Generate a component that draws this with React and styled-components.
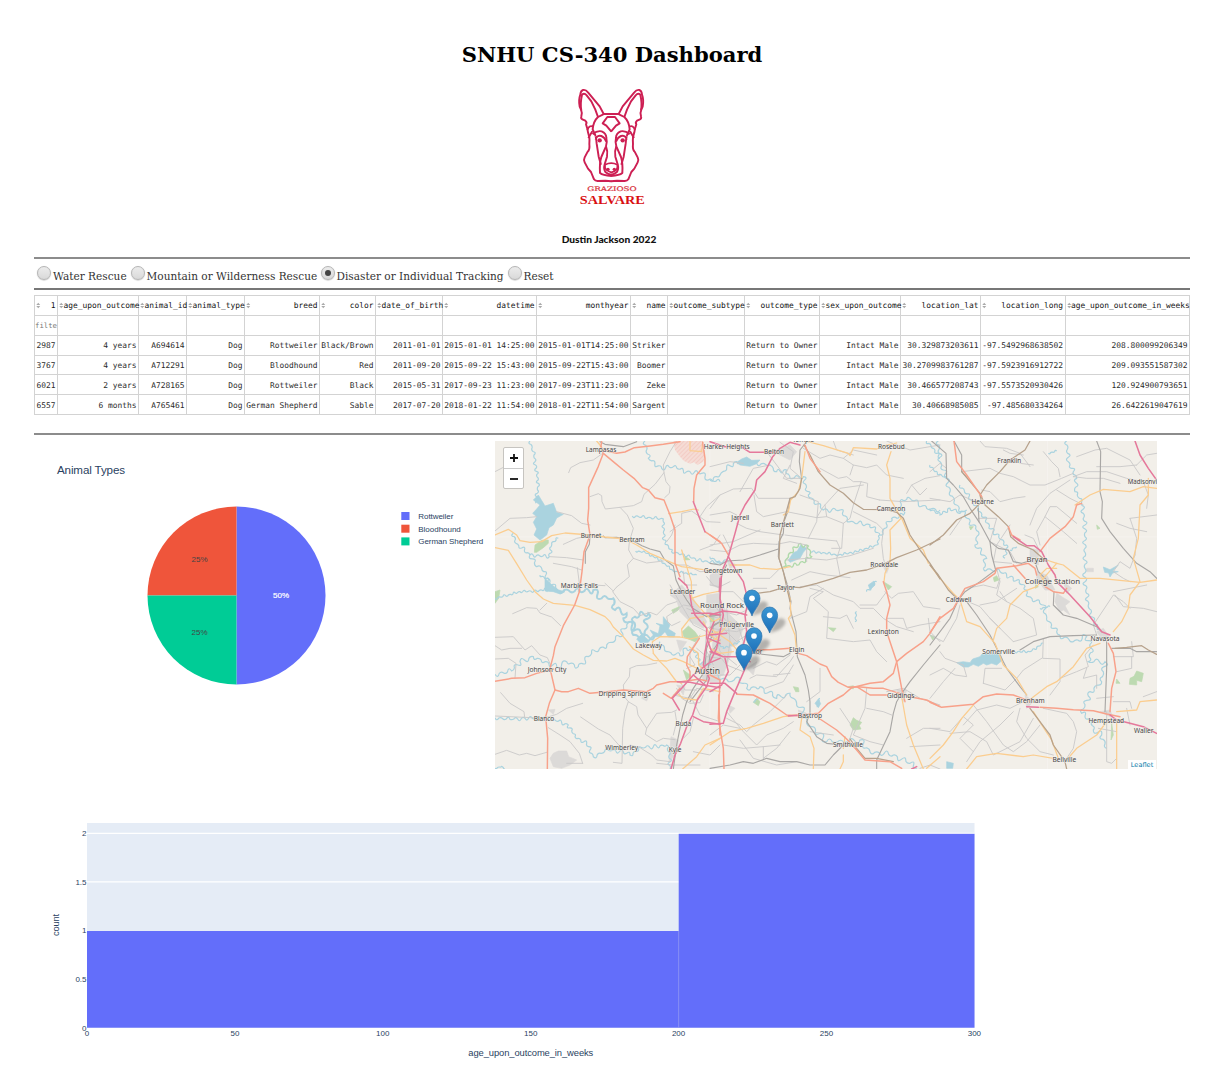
import React from "react";
import styled, { createGlobalStyle } from "styled-components";

const GlobalStyle = createGlobalStyle`
  body {
    margin: 0;
    background: #fff;
    color: #000;
    font-family: "DejaVu Serif", serif;
  }
  * { box-sizing: border-box; }
`;

const Page = styled.main`
  width: 1216px;
  height: 1077px;
  padding: 40px 26px 0 34px;
  overflow: hidden;
`;

const Header = styled.header`
  display: flex;
  flex-direction: column;
  align-items: center;
  height: 217px;
`;

const Title = styled.h1`
  margin: 0;
  height: 30px;
  line-height: 30px;
  font-size: 21.1px;
  font-weight: 700;
  white-space: nowrap;
`;

const Logo = styled.svg`
  display: block;
  width: 84px;
  height: 130px;
  margin-top: 10px;
`;

const Author = styled.h5`
  margin: 22px 6px 0 0;
  font: 900 10.2px/15px Lato, sans-serif;
  color: #111;
`;

const Rule = styled.hr`
  margin: 0;
  border: 0;
  height: 2px;
  background: ${(p) => p.$tone || "#8c8c8c"};
`;

const Options = styled.div`
  display: flex;
  height: 29px;
  padding: 6px 0 0 3px;
`;

const Option = styled.label`
  display: flex;
  align-items: flex-start;
  width: ${(p) => p.$width}px;
  font-size: 10.55px;
  line-height: 22px;
  color: #333;
  white-space: nowrap;
`;

const Radio = styled.span`
  flex: none;
  display: grid;
  place-items: center;
  width: 14px;
  height: 14px;
  margin: 1px 2px 0 0;
  border: 1px solid #b5b5b5;
  border-radius: 50%;
  background: linear-gradient(#ececec, #d9d9d9);
  box-shadow: 0 0.5px 1px #bbb;
  &::after {
    content: "";
    width: 6px;
    height: 6px;
    border-radius: 50%;
    background: ${(p) => (p.$on ? "#444" : "transparent")};
  }
`;

const Table = styled.table`
  width: 1156px;
  margin-top: 5px;
  table-layout: fixed;
  border-collapse: collapse;
  font: 7.9px/17px "DejaVu Sans Mono", monospace;
  color: #2b2b2b;
`;

const Cell = styled.td`
  height: ${(p) => p.$h || 20}px;
  padding: ${(p) => p.$drop || 0}px 1.5px 0 0;
  border: 1px solid #d3d3d3;
  text-align: right;
  white-space: nowrap;
`;

const HeadInner = styled.div`
  display: flex;
  align-items: center;
  justify-content: space-between;
  padding-left: 1px;
  line-height: 18px;
  color: #111;
`;

const SortIcon = styled.svg`
  flex: none;
  width: 4.5px;
  height: 7px;
`;

const FilterText = styled.div`
  text-align: left;
  font-size: 7.3px;
  color: #777;
`;

const Charts = styled.section`
  display: flex;
  height: 334px;
  padding-top: 6px;
`;

const PieChart = styled.svg`
  display: block;
  flex: none;
  width: 461px;
  height: 328px;
`;

const MapBox = styled.div`
  position: relative;
  flex: none;
  width: 662px;
  height: 328px;
  overflow: hidden;
  background: #f2efe9;
`;

const MapDrawing = styled.svg`
  display: block;
  width: 662px;
  height: 328px;
`;

const ZoomControl = styled.div`
  position: absolute;
  left: 8px;
  top: 6px;
  width: 21px;
  border: 1px solid #c6c4c0;
  border-radius: 2px;
  background: #fff;
`;

const ZoomButton = styled.div`
  display: grid;
  place-items: center;
  height: 20px;
  & + & { border-top: 1px solid #ccc; }
`;

const Attribution = styled.div`
  position: absolute;
  right: 1px;
  bottom: -1px;
  width: 28px;
  height: 10px;
  background: #fffffff0;
  color: #0078a8;
  text-align: center;
  font: 6.6px/10px "DejaVu Sans", sans-serif;
`;

const Histogram = styled.svg`
  display: block;
  width: 1000px;
  height: 290px;
  margin-top: 11px;
`;

const columns = [
  ["1", 23], ["age_upon_outcome", 81], ["animal_id", 48], ["animal_type", 58], ["breed", 75],
  ["color", 56], ["date_of_birth", 67], ["datetime", 94], ["monthyear", 94], ["name", 37],
  ["outcome_subtype", 77], ["outcome_type", 75], ["sex_upon_outcome", 81], ["location_lat", 80],
  ["location_long", 84.5], ["age_upon_outcome_in_weeks", 124.5],
];

const rows = [
  ["2987", "4 years", "A694614", "Dog", "Rottweiler", "Black/Brown", "2011-01-01", "2015-01-01 14:25:00", "2015-01-01T14:25:00", "Striker", "", "Return to Owner", "Intact Male", "30.329873203611", "-97.5492968638502", "208.800099206349"],
  ["3767", "4 years", "A712291", "Dog", "Bloodhound", "Red", "2011-09-20", "2015-09-22 15:43:00", "2015-09-22T15:43:00", "Boomer", "", "Return to Owner", "Intact Male", "30.2709983761287", "-97.5923916912722", "209.093551587302"],
  ["6021", "2 years", "A728165", "Dog", "Rottweiler", "Black", "2015-05-31", "2017-09-23 11:23:00", "2017-09-23T11:23:00", "Zeke", "", "Return to Owner", "Intact Male", "30.466577208743", "-97.5573520930426", "120.924900793651"],
  ["6557", "6 months", "A765461", "Dog", "German Shepherd", "Sable", "2017-07-20", "2018-01-22 11:54:00", "2018-01-22T11:54:00", "Sargent", "", "Return to Owner", "Intact Male", "30.40668985085", "-97.485680334264", "26.6422619047619"],
];

const options = [["Water Rescue", 93.5], ["Mountain or Wilderness Rescue", 190], ["Disaster or Individual Tracking", 187], ["Reset", 60]];

/* Each map tile is traced on its own grid; the tiles sit side by side, 660 units apart. */
const tiles = [
  {
    minor: [
      "15,110 40,97", "236,113 242,98 270,83 310,75 338,55", "390,217 430,212 455,200 462,178 495,148 522,113 520,90 540,50 560,18", "522,113 528,140 540,155 538,175 524,188",
      "300,185 325,176 335,182 336,200 346,222 390,217 412,240 430,280 418,320 416,345 430,370 412,390 418,425 400,440 380,456",
      "15,288 60,250 110,248 140,245", "200,230 245,242 275,265 300,270", "220,328 260,310 300,302", "180,365 230,368 280,375", "190,385 245,395 275,405", "262,398 268,445 265,470",
      "430,370 470,384 520,378", "380,456 368,470 390,500 430,520 450,542 480,532 500,540 530,510 560,500", "345,445 370,468", "275,448 345,452",
      "68,536 110,518 140,520 150,534 185,546 212,572", "170,505 150,525", "15,607 70,605 90,628 105,645 125,632 150,660 172,668 182,690",
      "15,672 55,670 78,685 75,730", "15,632 35,645 60,640 95,640", "420,700 440,692 470,690 500,684", "420,700 418,725 400,750 403,785 415,800 405,830 398,880 396,985 370,982",
      "32,773 60,805 102,830 104,847 15,843", "104,847 160,850 200,838 230,820 278,805", "272,846 325,882 360,900 395,940", "415,800 440,815 444,840 470,880 466,898 500,920 520,910 555,914",
      "470,880 500,835 545,832 560,825", "175,878 210,900 240,920 268,955 278,985", "278,985 230,985", "15,958 50,946 88,960 110,955 135,962 170,952", "398,945 420,930 450,938 485,960 500,975 540,980",
      "500,985 550,990 630,990", "540,290 560,275 575,265 575,235 605,228 650,260 690,262", "530,320 545,300 555,270", "690,180 650,215 628,248", "690,300 670,330 630,345",
      "555,390 590,390 630,410 690,408", "580,410 584,450 620,450", "533,560 530,545 560,525 580,510 610,515", "533,560 545,572 570,560", "540,450 554,475 580,520 610,570 650,590",
      "650,425 670,450 690,460", "590,520 640,540 690,550", "600,665 615,690 590,700", "560,760 575,790 600,805 630,803 640,780", "570,740 585,765 620,765", "600,780 630,840 690,860",
      "555,830 560,860 550,900", "610,850 600,890 580,910", "690,560 650,580 646,640 670,690", "620,640 650,665 690,670", "630,600 600,650 600,690", "550,780 600,790 620,760 670,770", "610,950 660,960 690,930",
    ],
    rail: ["340,303 345,308 380,307 430,318 456,332 480,342 510,350 523,373 550,393 558,435 575,470 590,495 608,520 650,545 690,540", "300,302 298,328 286,350 286,385", "690,560 670,570 665,605 650,640 645,690 640,715 610,760 590,800 578,840 568,890 560,930 550,1002", "330,20 345,28 400,35 440,20", "690,615 660,660 650,735 600,800"],
    primary: [
      "15,300 55,283 80,300 90,317 120,322 155,320 185,302 225,294 300,300 345,306 405,312 440,330 480,355 545,383 575,395 640,404 690,406",
      "15,338 55,346 80,386 110,435 135,470 160,492 190,505 255,511 300,524 345,545 360,560 370,576 400,605 430,642 460,660 490,676 530,678 555,670 580,680 625,702",
      "536,236 575,230 612,222 625,225", "575,345 590,395 604,440 605,490 640,530 670,560 690,550", "605,490 640,478 690,468", "490,655 487,620 510,605 570,606 600,612 650,600 690,590",
      "577,606 575,582 600,550 640,545", "490,655 510,680 530,700 558,738 575,745", "600,18 600,47 635,50 638,22", "560,775 580,790 620,795 640,760 690,770", "320,18 330,30 336,50",
      "578,1002 620,965 645,930 690,910", "598,635 625,655 626,690 660,720", "640,560 660,600 690,620",
    ],
    trunk: [
      "335,18 333,33 340,55 325,94 296,158 296,220 293,255 300,300 282,350 276,410 268,470 254,510 220,572 195,635 190,662 180,700 195,765 178,805 167,845 173,910 172,1002",
      "340,55 376,85 400,105 432,130 458,158 475,165 495,188 522,195 540,240 555,285 555,385 570,425", "338,46 380,55 405,51 433,38 480,33 520,28 570,20",
      "638,22 645,70 645,90 620,120 612,160 611,200", "645,290 690,320", "15,739 65,730 105,728 140,715 168,708 190,702",
      "195,765 215,770 235,770 265,760 300,775 350,770 400,765 470,770 490,760 500,750 540,740 573,740 625,733 650,737", "628,610 612,635 592,665 590,690 600,710 600,732", "520,775 544,790 570,760", "686,780 690,900",
    ],
    motorway: [
      "610,200 625,240 645,290", "566,430 590,452 600,480 605,512 615,540 632,560 650,580 650,608 665,650 690,660", "605,535 660,535 690,540", "690,430 688,470",
      "672,560 655,605 645,650 640,690 658,730 650,755 622,795 608,840 590,875 572,925 555,960 543,1002", "562,740 600,742 640,750 690,758", "547,790 575,760 610,720 655,685 690,670", "547,790 568,825", "610,845 640,860 690,868", "610,720 650,755", "655,610 690,625",
    ],
    river: [
      ["120,18 132,60 138,100 145,145 138,205", 7], ["70,295 78,325 120,360 140,395 155,400 180,440 205,465", 9], ["205,310 185,325 178,365 120,360", 7],
      ["15,490 55,480 90,470 140,468 170,462", 5], ["205,465 270,470 310,465 335,490 370,490 375,525 410,535 400,550 425,575 465,600 475,535 435,545 430,600 460,610 510,600", 13, 6],
      ["15,718 65,708 90,680 130,665 165,680 200,695 230,680 265,695 305,655 350,630 390,605 410,570 430,565", 11], ["15,848 60,853 105,850 170,850 195,855 235,870 255,905 290,925 310,965 355,945 400,950 420,960 455,938 490,935 530,930 538,960 540,1002", 8],
      ["465,18 475,70 515,100 550,95 590,110 635,115 655,135 690,140", 9], ["427,243 520,252 522,315 545,350 575,357 625,375 690,385", 6], ["437,348 465,352 510,375 550,408 620,420", 4], ["510,620 530,650 570,662 590,640 620,650 625,680 690,700", 9], ["15,1000 35,994 45,1002", 3], ["150,420 175,435 170,470", 5],
    ],
    water: ["130,195 145,180 165,213 190,205 200,232 220,238 200,249 190,270 177,278 170,300 150,315 132,300 140,282 130,262 140,245 128,235 140,222 150,210", "165,430 180,445 205,465 225,470 210,477 190,470 165,468", "440,612 455,598 475,615 490,600 480,585 505,596 510,572 498,565 520,570 520,545 540,570 535,582 556,595 553,606 535,606 525,590 510,605 490,605 475,622 450,623"],
    green: ["135,330 155,316 175,315 175,325 160,338 140,352 133,352", "577,590 595,573 615,590 628,610 615,620 582,607", "15,470 30,465 26,490 15,505", "580,705 603,722 590,735", "585,364 600,374 582,375", "545,525 568,515 565,525 550,535"],
    urban: ["190,955 205,948 230,948 236,965 260,975 240,990 215,1000 190,995 180,970", "540,480 575,450 610,490 650,560 640,580 600,560 570,530 560,495", "560,615 590,620 570,650", "630,690 670,640 690,640 690,740 640,740", "460,780 475,785 470,798 455,790", "543,905 565,915 560,955 537,980", "175,825 195,823 190,838", "650,480 690,475 690,570 650,540", "560,750 585,755 580,780"],
    labels: [["Lampasas", 333, 51, 92], ["Harker Heights", 710, 42, 138], ["Burnet", 303, 308, 62], ["Bertram", 426, 320, 76], ["Marble Falls", 268, 459, 111], ["Leander", 578, 476, 76], ["Lakeway", 476, 639, 80], ["Johnson City", 171, 712, 116], ["Dripping Springs", 404, 784, 157], ["Blanco", 162, 857, 62], ["Wimberley", 395, 944, 98], ["Buda", 580, 873, 47], ["Kyle", 555, 950, 38], ["Georgetown", 699, 413, 116]],
  },
  {
    minor: [
      "0,95 60,80 100,85", "0,220 30,180 70,162 125,160 145,190 240,190", "0,240 60,230 80,240", "132,180 140,230 160,245 230,230 320,248", "80,265 110,280 150,290 220,300", "0,330 70,320 150,285", "0,345 50,350 90,330 130,325 200,328",
      "90,170 130,100 180,90", "170,50 200,90 230,130 275,130", "240,90 220,130 260,145", "225,300 300,310 380,318", "320,248 350,245 400,265 420,250 430,210 453,140 473,145 470,185 508,195", "320,248 340,215 390,160 460,150",
      "275,130 240,100 250,50 210,22", "330,100 385,130 410,125 430,140 453,140", "280,40 330,70 360,60 400,70 430,90 420,120", "430,90 470,98 500,90 530,120 580,130", "400,70 430,45 500,60", "370,18 380,45 430,60", "530,18 600,45 690,30", "590,175 605,150 645,130 690,122", "605,150 630,180 650,160", "508,195 580,200 690,195", "400,265 395,340 365,340", "430,230 500,265 520,285", "520,285 515,325 520,370 530,405", "380,318 390,340 380,370 390,420", "295,310 320,260 325,200 270,180", "350,245 345,210", "230,375 290,370 350,375 420,362 490,340", "200,328 240,320 290,330 290,380", "210,400 180,430 130,430", "245,435 300,410 350,420 420,428", "300,460 340,470 310,490 355,530 350,610 430,620 480,615 500,650 530,680", "270,455 320,450 370,480 430,500 450,520 490,520 520,550 560,575 610,590", "240,550 290,530 300,485 340,460", "340,545 390,550 410,540 430,580", "525,470 545,490 565,475 610,470 640,515 690,522", "530,470 500,510 450,510", "530,550 580,550 590,580 630,570 690,560", "655,550 660,590 690,620",
      "120,730 140,720 200,725 240,680 250,665", "165,760 220,740 250,690", "190,720 240,715", "330,700 330,770 290,800", "390,820 430,880 420,910", "470,760 465,820 430,900 480,920 520,930", "470,820 520,830 545,840", "530,770 580,760 630,790 690,810",
      "50,850 90,870 110,890 130,870 180,830 230,780", "50,830 100,890 140,930 170,900 220,880 250,860", "40,930 100,940 160,935 210,930", "0,900 40,870 90,880", "90,915 130,970 200,990 260,980", "160,935 160,970", "240,890 200,940 160,970", "300,890 370,900", "590,910 640,880 690,880", "600,935 690,930", "690,1002 660,990 630,1000", "0,550 40,530 80,540 120,520", "0,600 40,580 80,620 110,600", "0,450 30,455 60,440", "20,470 70,470 100,500", "50,520 60,620 50,690", "80,560 100,620 90,650", "10,640 50,690 100,710", "0,720 60,720 90,690", "130,700 170,680 200,690 240,660", "100,490 130,460 170,460", "40,300 60,340 50,380", "20,520 50,560 110,570", "0,580 80,590 130,570", "15,590 30,650 80,690",
    ],
    rail: ["240,190 235,225 222,260 220,295 207,320 205,365 220,410 232,450 243,500 240,520 258,590 262,665 285,720 295,765 300,800 300,835 290,860 320,905 350,925 395,930 435,932", "0,385 30,390 50,378 100,375 150,360 205,342", "130,655 220,665 240,655 240,640", "0,580 30,560 30,480 35,420 50,390", "0,1000 60,990 100,980 130,985 170,970 210,980 260,980 300,990 345,990 370,960 400,930", "500,1002 500,975 540,890 550,835 560,800 575,775 600,740 640,690 690,630", "275,130 268,80 270,45 290,20"],
    brown: ["282,30 300,60 325,110 360,150 400,175 430,203 460,223 530,224 560,232 580,250 600,300 630,345 660,385 690,432", "690,312 620,345 560,368 520,388 470,405 420,412 370,430 320,445 270,458 230,455 180,470 120,478", "275,130 270,160 255,185 240,190 210,300 207,370 220,410 240,500", "420,912 440,940 465,970 500,970 550,980"],
    primary: ["285,50 275,130 265,170 242,195 235,230 220,240", "285,18 340,32 415,55 420,62 430,38 500,42 530,30 560,24", "543,50 530,90 540,130 540,190 573,250 540,285 542,340 540,380 525,415 522,440", "575,250 600,310 640,345 655,385", "60,390 120,390 150,400 200,403 240,395", "230,460 240,490 243,540 235,550 255,600 260,650", "60,560 20,610 0,620", "0,930 60,890 110,880 160,865 220,845 262,840", "275,850 270,885 300,905 312,940 310,1002", "400,960 400,980 390,1002", "560,775 575,785 590,870 610,930 640,1002", "690,965 650,1000", "0,580 60,620 110,680", "0,640 30,655 70,650", "405,905 400,940"],
    trunk: ["285,30 300,70 330,110", "0,300 35,325 55,360", "110,644 180,644 240,640", "265,655 290,662 330,687 350,695 365,725 385,742 415,757 445,755 490,760 520,760 600,785 650,795 690,815", "425,758 400,780 355,805 325,835 275,840", "425,758 480,745 520,740 550,715 560,680 590,655 640,620 660,595 690,545", "520,440 530,470 540,510 530,550 530,590 560,680 575,760 585,800", "80,778 130,780 180,805 230,840 280,843", "330,852 380,885 410,912 440,945 465,975 540,980 575,1000", "0,720 30,735 25,850 40,940 42,1002", "440,755 480,780 530,780"],
    motorway: ["270,30 240,22 210,40 188,65 165,110 140,135 135,165 105,210 90,240 75,295 55,365 35,410 30,490 40,540 30,590 20,640 0,680", "55,365 80,410 100,440 115,500 105,540 110,590 100,630 110,690 75,770 50,830 40,865 0,868", "0,20 45,35 90,33 120,52 195,52", "0,540 40,528 80,532 110,540", "0,650 40,665 100,665 120,680", "0,745 45,745 80,775", "45,670 55,710 35,750 0,770", "235,843 275,840", "0,600 50,595", "605,1002 620,995"],
    river: [["0,135 30,120 50,98 80,80 100,85", 9], ["140,85 180,90 200,110 230,105 240,130 280,125 295,180 340,225 390,225 420,260 480,270 510,300 545,250 580,240 570,200 600,190 625,205 650,220 690,225", 9], ["510,300 500,330 440,350 385,360 330,352 300,350", 5], ["0,365 30,385 50,375", 6], ["25,720 55,740 90,730 110,760 150,755 200,790 240,775 260,805 280,830 290,865 330,895 350,920 400,920 450,915 480,950 550,960 600,985 620,1000", 12], ["0,600 40,640 90,620", 4], ["500,440 470,470", 6], ["650,18 670,40 690,70", 7], ["440,530 435,560", 5], ["130,800 145,790", 4], ["330,790 320,815", 4]],
    water: ["80,82 95,72 110,66 125,76 150,75 140,86 120,94 90,90", "235,376 250,353 262,348 272,330 290,340 280,352 270,370 240,382", "475,450 492,438 495,450 480,465", "315,805 325,792 332,806 325,818"],
    green: ["250,755 265,758 267,770 257,770", "420,870 430,848 440,856 455,862 448,872 453,882 430,885", "130,802 140,790 150,800 145,812", "355,578 378,580 370,590", "520,440 545,455 535,465", "415,755 430,752 430,762", "0,540 12,538 12,560 0,560"],
    urban: ["0,505 25,490 50,530 100,580 80,630 50,640 0,600", "10,600 50,590 65,650 40,720 0,735", "190,50 240,30 260,50 240,75", "265,825 290,835 290,850 270,850", "0,420 30,405 30,460 0,450", "50,375 80,390 60,400", "560,765 590,765 580,800", "515,385 540,390 530,415", "110,700 140,680 130,720", "55,810 75,820 60,835"],
    labels: [["Belton", 192, 57, 60], ["Temple", 280, 22, 65], ["Rosebud", 544, 42, 80], ["Jarrell", 91, 254, 54], ["Bartlett", 217, 276, 69], ["Cameron", 543, 229, 86], ["Rockdale", 523, 396, 84], ["Taylor", 228, 464, 54], ["Round Rock", 36, 519, 132, 22], ["Pflugerville", 80, 575, 104], ["Manor", 127, 656, 60], ["Elgin", 260, 651, 46], ["Austin", -8, 718, 76, 25], ["Lexington", 520, 596, 93], ["Giddings", 572, 790, 82], ["Bastrop", 300, 850, 73], ["Smithville", 414, 937, 90]],
  },
  {
    minor: [
      "95,110 180,100 210,115 250,125 300,150 345,150 395,130 430,115", "150,18 165,35 230,40 270,55 300,95", "220,45 240,55 280,60", "340,50 365,80 385,100 390,125", "270,85 310,90", "0,110 30,85 50,100", "0,190 60,200 90,180 150,205", "155,165 180,170 210,200 250,190 285,185",
      "430,125 470,110 530,110 590,130 640,140", "430,125 470,130 520,130 570,145", "500,95 570,95 620,90", "440,65 495,45 530,40 600,75 630,120", "300,270 320,220 360,175 420,135", "330,330 320,290 345,245 360,215 380,215 440,265", "345,245 400,290 440,325", "380,165 420,190 460,210", "285,300 310,310 325,340", "240,270 200,330 190,380 245,385", "145,250 200,250 180,320 240,350 260,385", "95,250 60,300", "200,400 210,440 200,480 230,500", "110,460 160,450 200,460 210,430", "90,490 150,515 180,550 210,580", "150,510 200,500 260,460", "210,470 230,500 270,520 310,550 320,600 250,620", "180,550 250,620", "0,600 40,620 80,550 90,510", "30,650 45,670 100,690 110,725 75,720 40,700 0,720", "0,790 40,740 75,700", "100,870 140,825 200,810 240,820 280,800", "160,745 165,700 215,700", "160,745 225,765 260,730 280,705 335,670", "340,610 338,670 390,672 390,740 360,780", "390,730 440,710 475,695 465,660 490,630", "130,810 170,860 220,930 250,950 290,920 330,870", "60,895 120,890 170,920 190,960 270,920 310,850", "0,880 60,890 100,845 130,870 90,910 130,950", "110,980 150,920 210,870 250,830", "270,820 260,860 290,910 330,950 370,960", "340,820 410,835 430,860 440,890 430,940 410,970", "500,600 490,570 510,540 550,480 580,500 600,520", "560,265 600,280 650,290", "640,140 655,180 650,220", "600,250 680,240", "615,360 620,310 600,250", "615,360 600,400 570,380 550,410 580,430 600,440", "550,470 600,460 650,450", "555,480 580,515 640,520 680,530", "620,90 650,60 680,55", "550,665 610,665 605,620", "560,710 605,700 605,665", "550,800 600,800 605,820", "500,790 550,785", "500,860 560,860", "530,830 530,980 545,985 560,970", "505,880 560,890", "590,820 600,870", "680,770 640,785", "500,760 500,720 460,730 470,700",
    ],
    rail: ["5,18 48,55 50,130 70,150 100,185 120,220 150,265 180,320 185,360 197,405 150,440 105,470 85,495 60,550 0,630", "72,18 95,60 95,110 130,150", "180,320 205,340 235,345 250,380 275,385 290,380", "145,220 147,260", "500,18 512,50 510,170 517,200 515,250 540,290 580,340 620,385 660,410 680,430", "372,470 370,510 400,540 440,550 500,575 515,590", "270,645 310,620 360,605 430,602 500,600", "318,390 325,410 355,440", "530,620 530,700 525,830", "545,640 600,640 620,650 680,650", "110,500 140,540 180,600 220,680 230,700 270,755 290,780"],
    brown: ["300,18 285,45 240,75 210,110 170,150 150,180 155,200 120,235 80,255 40,300 0,330", "95,110 150,175 165,210 205,245 235,275 242,305 265,325 310,345 350,380", "0,390 25,420 55,465 90,500", "300,820 345,880 360,900 370,930 405,980 410,1002", "555,640 590,637 635,632 655,645 680,658"],
    primary: ["0,390 30,430 70,475 90,495 110,560 150,575 195,625 220,690 260,730 290,780", "190,615 200,580 230,550 240,510 280,470 320,455 340,430 380,385", "435,210 480,180 520,163 600,170 640,155 680,160", "655,130 655,180 630,210 625,310 615,350 610,370 630,440 600,480 595,520 575,560 550,590", "380,385 400,390 450,430 510,430 630,442 680,435", "350,450 330,420 350,400 380,400", "315,370 350,375 380,385", "285,805 350,755 380,740 430,695 470,640 510,625", "0,970 40,930 70,890 95,850 130,810", "110,1002 140,965 200,955 280,965 310,960 370,970", "310,830 345,885 365,915 385,970", "410,975 440,940 500,900 530,860", "560,860 560,1002", "560,830 620,825 630,800 680,795"],
    trunk: ["72,18 80,80 110,120 155,185", "330,350 360,310 405,275 430,245 440,210 455,205", "0,593 30,550 70,520 85,495 105,460 160,440 195,415 200,400 260,392 295,385 315,400 320,420", "250,390 285,430", "235,275 245,300 270,315", "345,455 370,470 400,475 410,460", "0,802 35,817 130,808 160,785 200,777 250,780 290,795", "330,817 380,820 430,824 490,827 530,837 570,845", "535,625 550,655 558,710 545,760 540,830", "80,490 90,490"],
    motorway: ["250,305 290,332 312,332 335,350 355,390 375,420 380,440 420,480 480,545 515,590 540,600", "615,18 630,60 655,100 680,135", "290,815 325,817", "540,840 560,855 600,865 640,875 680,895"],
    river: [["25,18 30,80 50,130 60,170 80,210 120,260 145,290 135,330 170,370 160,400", 10], ["160,400 210,410 250,430 285,455 295,485 340,510 350,550 380,590 390,600", 9], ["390,600 430,620 470,605 485,640 475,680 525,680 515,740 480,770 455,835 485,860 490,885 515,900 530,940", 12], ["0,220 30,240 60,220 90,235 110,225", 7], ["90,150 150,230 190,290 230,330 225,370", 8], ["410,18 415,80 440,130 435,170 455,200 465,270 465,340 465,400 465,440 475,510 495,570 510,580", 9], ["355,55 380,48", 4], ["255,650 300,650 340,625", 5], ["330,520 360,515", 4], ["240,345 260,335", 5], ["50,130 15,110 0,90", 5]],
    water: ["80,683 100,680 120,683 128,672 150,665 158,655 180,658 210,655 218,675 200,690 185,685 170,690 160,685 145,694 130,688 115,696 100,696", "520,396 540,404 565,390 548,408 565,410 548,414 540,426 536,414 524,412", "50,980 70,985 68,1000 50,1000"],
    green: ["600,730 612,724 620,708 640,715 635,740 620,736 620,750 598,748", "190,428 200,422 207,435 193,440", "500,270 510,280 502,283", "545,865 550,900 543,915", "560,732 570,745 558,745", "118,275 130,275 122,285", "0,600 15,605 8,615", "317,448 325,455 316,460"],
    urban: ["320,410 350,420 375,465 345,465 320,430", "380,475 400,488 420,500 405,512 420,540 400,525 390,530 375,500", "400,440 425,460 410,475", "300,340 325,345 325,390 300,380", "500,590 520,580 540,610 520,620", "470,400 490,400 490,410 470,410", "285,780 310,800 290,820", "510,830 540,825 550,850"],
    labels: [["Franklin", 238, 83, 72], ["Hearne", 158, 207, 67], ["Madisonville", 647, 148, 108], ["Bryan", 321, 380, 63, 22], ["College Station", 367, 446, 166, 22], ["Caldwell", 86, 500, 77], ["Somerville", 206, 656, 98], ["Navasota", 525, 618, 87], ["Brenham", 301, 803, 86], ["Hempstead", 529, 865, 107], ["Waller", 641, 893, 58], ["Bellville", 403, 982, 71]],
  },
];

function meander(text, amplitude) {
  const points = text.split(" ").map((p) => p.split(",").map(Number));
  let d = `M${points[0]}`;
  let side = 1;
  for (let i = 1; i < points.length; i++) {
    const [x0, y0] = points[i - 1];
    const [x1, y1] = points[i];
    const dx = x1 - x0;
    const dy = y1 - y0;
    const length = Math.hypot(dx, dy);
    const steps = Math.max(1, Math.round(length / (amplitude + 3)));
    for (let s = 0; s < steps; s++) {
      const swing = side * amplitude * (0.95 + 0.6 * Math.sin(i * 2.3 + s * 1.7));
      const mid = (s + 0.5) / steps;
      const end = (s + 1) / steps;
      d += `Q${(x0 + dx * mid - (dy / length) * swing).toFixed(1)},${(y0 + dy * mid + (dx / length) * swing).toFixed(1)} ${(x0 + dx * end).toFixed(1)},${(y0 + dy * end).toFixed(1)}`;
      side = -side;
    }
  }
  return d;
}

const Lines = ({ items = [], color, width }) => (
  <g fill="none" stroke={color} strokeWidth={width} strokeLinejoin="round" strokeLinecap="round">
    {items.map((p) => <polyline key={p} points={p} />)}
  </g>
);

const Areas = ({ items, color }) => (
  <g fill={color} stroke={color} strokeWidth="2" strokeLinejoin="round">
    {items.map((p) => <polygon key={p} points={p} />)}
  </g>
);

const pins = [[786, 543], [839, 594], [792, 656], [762, 706]];

function RegionMap() {
  const each = (draw) => tiles.map((t, i) => <g key={i} transform={`translate(${i * 660} 0)`}>{draw(t)}</g>);
  return (
    <MapBox>
      <MapDrawing viewBox="15 18 1986 984">
        <defs>
          <linearGradient id="pin" x1="0" y1="0" x2="0" y2="1">
            <stop offset="0" stopColor="#3c97d3" />
            <stop offset="1" stopColor="#1d6fb9" />
          </linearGradient>
          <filter id="soft" x="-50%" y="-50%" width="200%" height="200%"><feGaussianBlur stdDeviation="5" /></filter>
          <pattern id="range" width="9" height="9" patternUnits="userSpaceOnUse" patternTransform="rotate(45)">
            <rect width="9" height="9" fill="#f5dcd5" />
            <path d="M0 0V9" stroke="#f2c5bd" strokeWidth="4" />
          </pattern>
        </defs>
        <rect x="15" y="18" width="1986" height="984" fill="#f2efe9" />
        <path d="M660 18V1002M1672 18V1002M15 306H2001" stroke="#f7f5f1" strokeWidth="2" />
        <polygon points="550,18 555,45 570,65 582,78 600,86 612,82 622,90 640,80 645,62 638,18" fill="url(#range)" />
        {each((t) => (
          <>
            <Areas items={t.urban} color="#dcdad8" />
            <Areas items={t.green} color="#bddab1" />
            <Areas items={t.water} color="#aad3df" />
            <g fill="none" stroke="#aad3df">
              {t.river.map(([p, a, w = 3.6]) => <path key={p} d={meander(p, a)} strokeWidth={w} />)}
            </g>
          </>
        ))}
        <path d={meander("880,395 895,360 925,330 955,333 965,365 920,390 880,395", 8)} fill="none" stroke="#afd9a9" strokeWidth="4" />
        {each((t) => <Lines items={t.minor} color="#c9c8c8" width="2.7" />)}
        {each((t) => <Lines items={t.rail} color="#a9a7a5" width="3.4" />)}
        {each((t) => <Lines items={t.primary} color="#fbcd8f" width="3.8" />)}
        {each((t) => <Lines items={t.brown} color="#b7a28c" width="3.8" />)}
        {each((t) => <Lines items={t.trunk} color="#f8a18a" width="4.4" />)}
        {each((t) => <Lines items={t.motorway} color="#e5789b" width="4.6" />)}
        <g fontFamily="Noto Sans, sans-serif" textAnchor="middle" fill="#444" stroke="#f5f2ed" strokeWidth="2.5" strokeLinejoin="round" paintOrder="stroke">
          {each((t) => t.labels.map(([name, x, y, width, size = 20]) => (
            <text key={name} x={x} y={y} fontSize={size} textLength={width} lengthAdjust="spacingAndGlyphs">{name}</text>
          )))}
        </g>
        {pins.map(([x, y]) => (
          <g key={x} transform={`translate(${x} ${y})`}>
            <path d="M0 0L16 -34Q34 -52 46 -38Q52 -24 26 -8Z" fill="#444" opacity=".36" filter="url(#soft)" />
            <path d="M0 0C-5 -17 -24 -32 -24 -53A24 25 0 0 1 24 -53C24 -32 5 -17 0 0Z" fill="url(#pin)" stroke="#2d73aa" strokeWidth="2" />
            <circle cy="-53" r="8.5" fill="#fff" />
          </g>
        ))}
      </MapDrawing>
      <ZoomControl>
        {["M1 5H9M5 1V9", "M1 5H9"].map((d) => (
          <ZoomButton key={d}><svg width="10" height="10"><path d={d} stroke="#111" strokeWidth="1.8" /></svg></ZoomButton>
        ))}
      </ZoomControl>
      <Attribution>Leaflet</Attribution>
    </MapBox>
  );
}

function DogLogo() {
  const half = (
    <>
      <path d="M124 102H101L89 79L54 37Q47 28 39 30Q32 32 31 44Q25 60 29 80L33 89Q37 97 34 109Q32 116 37 118L46 122Q52 127 48 133L52 146L54 157L58 172Q59 180 58 192Q60 210 53 215L44 232Q40 240 44 247L54 266L63 276L72 298Q76 304 85 303L106 302L124 304" />
      <path d="M34 91Q30 70 36 44Q43 38 50 46L64 64L76 89L84 111L100 103" />
      <path d="M84 111Q70 124 68 148L77 168M52 150Q58 134 69 140M55 174L67 154M68 163Q81 151 95 154Q109 160 109 173Q112 186 108 199L94 231Q88 250 90 279Q98 286 124 288" />
      <path d="M77 169Q79 178 80 191L86 230L93 254M77 179Q81 164 94 168Q104 172 109 185M108 199Q114 214 111 230L104 253Q100 268 107 277Q114 283 124 284" />
      <path d="M124 111H112L98 130L109 137L124 155" />
    </>
  );
  return (
    <Logo viewBox="0 0 252 390">
      <g fill="none" stroke="#cd1f53" strokeWidth="5.8" strokeLinejoin="round">
        <g>{half}</g>
        <g transform="translate(247 0) scale(-1 1)">{half}</g>
      </g>
      <path d="M105 254Q124 245 142 254V262Q141 272 124 277Q107 272 105 262Z" fill="none" stroke="#cd1f53" strokeWidth="5" />
      <g fill="#cd1f53"><circle cx="89" cy="181" r="6.5" /><circle cx="158" cy="181" r="6.5" /><circle cx="114" cy="268" r="5" /><circle cx="133" cy="268" r="5" /></g>
      <g textAnchor="middle">
        <text x="126" y="332" fontSize="19" fontFamily="DejaVu Serif, serif" fill="#d8313b" stroke="#d8313b" strokeWidth=".6" textLength="148" lengthAdjust="spacingAndGlyphs">GRAZIOSO</text>
        <text x="127" y="371" fontSize="37" fontWeight="700" fontFamily="Liberation Serif, serif" fill="#d90f12" textLength="195" lengthAdjust="spacingAndGlyphs">SALVARE</text>
      </g>
    </Logo>
  );
}

const breeds = [["Rottweiler", "#636efa", 35], ["Bloodhound", "#ef553b", 42.5], ["German Shepherd", "#00cc96", 65]];

function BreedPie() {
  return (
    <PieChart viewBox="34 441 461 328" fontFamily="Liberation Sans, sans-serif">
      <text x="57" y="473.5" fontSize="11.6" fill="#2a3f5f" textLength="68">Animal Types</text>
      <path d="M236.5 595.5V506.5A89 89 0 0 1 236.5 684.5Z" fill="#636efa" />
      <path d="M236.5 595.5H147.5A89 89 0 0 1 236.5 506.5Z" fill="#ef553b" />
      <path d="M236.5 595.5V684.5A89 89 0 0 1 147.5 595.5Z" fill="#00cc96" />
      <g fontSize="8" textAnchor="middle">
        <text x="281" y="598.3" fill="#fff" stroke="#fff" strokeWidth=".2">50%</text>
        <text x="199.5" y="561.5" fill="#444">25%</text>
        <text x="199.5" y="635" fill="#444">25%</text>
      </g>
      {breeds.map(([name, color, width], i) => (
        <g key={name}>
          <rect x="401.3" y={512 + i * 12.7} width="8.2" height="8" fill={color} />
          <text x="418.3" y={519 + i * 12.6} fontSize="8" fill="#2a3f5f" textLength={width}>{name}</text>
        </g>
      ))}
    </PieChart>
  );
}

function AgeHistogram() {
  const yTicks = [["2", 833.3], ["1.5", 881.8], ["1", 930.5], ["0.5", 979], ["0", 1027.8]];
  return (
    <Histogram viewBox="34 780 1000 290" fontFamily="Liberation Sans, sans-serif" fill="#2a3f5f" fontSize="8">
      <rect x="87" y="823" width="887.5" height="205" fill="#e5ecf6" />
      <path d="M87 833.3H974.5M87 881.8H974.5" stroke="#fff" strokeWidth="1.2" />
      <rect x="87" y="931" width="591.7" height="96.7" fill="#636efa" />
      <rect x="678.7" y="833.8" width="295.8" height="193.9" fill="#636efa" />
      <path d="M678.7 931V1027.7" stroke="#858cf2" strokeWidth=".8" />
      {yTicks.map(([t, y]) => <text key={t} x="86.5" y={y + 2.9} textAnchor="end">{t}</text>)}
      {[0, 50, 100, 150, 200, 250, 300].map((t) => <text key={t} x={87 + t * 2.958} y="1036.3" textAnchor="middle">{t}</text>)}
      <text x="530.8" y="1055.5" fontSize="9.4" textAnchor="middle" textLength="125">age_upon_outcome_in_weeks</text>
      <text transform="translate(58.8 925) rotate(-90)" fontSize="9.4" textAnchor="middle" textLength="22">count</text>
    </Histogram>
  );
}

export default function App() {
  return (
    <Page>
      <GlobalStyle />
      <Header>
        <Title>SNHU CS-340 Dashboard</Title>
        <DogLogo />
        <Author>Dustin Jackson 2022</Author>
      </Header>
      <Rule />
      <Options>
        {options.map(([name, width], i) => (
          <Option key={name} $width={width}><Radio $on={i === 2} />{name}</Option>
        ))}
      </Options>
      <Rule $tone="#777" />
      <Table>
        <colgroup>{columns.map(([name, width]) => <col key={name} style={{ width }} />)}</colgroup>
        <tbody>
          <tr>
            {columns.map(([name]) => (
              <Cell as="th" key={name} style={{ fontWeight: 400 }}>
                <HeadInner>
                  <SortIcon viewBox="0 0 5 7"><path d="M.3 3L2.5 .5L4.7 3ZM.3 4L2.5 6.5L4.7 4Z" fill="#aaa" /></SortIcon>
                  {name}
                </HeadInner>
              </Cell>
            ))}
          </tr>
          <tr>{columns.map(([name], i) => <Cell key={name}>{i === 0 && <FilterText>filte</FilterText>}</Cell>)}</tr>
          {rows.map((row, r) => (
            <tr key={row[0]}>{row.map((value, i) => <Cell key={i} $h={r === 1 ? 19 : 20} $drop={r === 0 ? 0 : 1}>{value}</Cell>)}</tr>
          ))}
        </tbody>
      </Table>
      <Rule style={{ marginTop: 18 }} />
      <Charts>
        <BreedPie />
        <RegionMap />
      </Charts>
      <AgeHistogram />
    </Page>
  );
}
